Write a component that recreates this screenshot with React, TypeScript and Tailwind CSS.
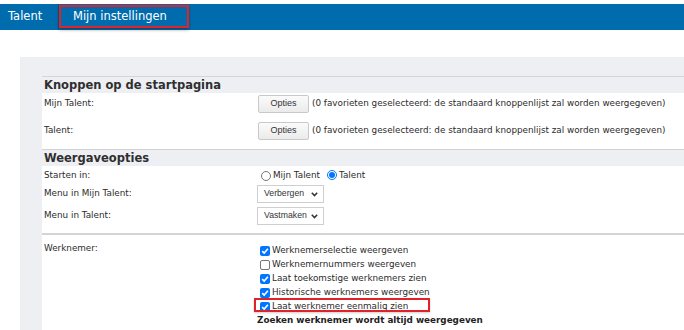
function Checkbox({ checked }: { checked: boolean }) {
  if (!checked) {
    return <span className="inline-block w-[10px] h-[10px] rounded-[2px] border border-[#767676] bg-white shrink-0" />;
  }
  return (
    <span className="inline-flex items-center justify-center w-[10px] h-[10px] rounded-[2px] bg-[#0075ff] shrink-0">
      <svg width="8" height="8" viewBox="0 0 8 8">
        <path d="M1.2 4.2 L3.2 6.1 L6.9 1.8" fill="none" stroke="white" strokeWidth="1.6" />
      </svg>
    </span>
  );
}

function Radio({ checked }: { checked: boolean }) {
  if (!checked) {
    return <span className="inline-block w-[10px] h-[10px] rounded-full border border-[#767676] bg-white shrink-0" />;
  }
  return (
    <span className="inline-flex items-center justify-center w-[10px] h-[10px] rounded-full border border-[#0075ff] bg-white shrink-0">
      <span className="w-[6px] h-[6px] rounded-full bg-[#0075ff]" />
    </span>
  );
}

function Select({ value }: { value: string }) {
  return (
    <div className="w-[67px] h-[18px] border border-[#cfcfcf] bg-white flex items-center justify-between pl-[6px] pr-[5px] font-['Liberation_Sans',sans-serif] text-[8.7px] text-[#333]">
      <span>{value}</span>
      <svg width="7" height="5" viewBox="0 0 7 5">
        <path d="M0.8 0.8 L3.5 3.6 L6.2 0.8" fill="none" stroke="#333" strokeWidth="1.5" />
      </svg>
    </div>
  );
}

function OptiesRow({ label }: { label: string }) {
  return (
    <div className="flex items-center h-[18px]">
      <div className="w-[213px]">{label}</div>
      <button className="ml-[1px] w-[51px] h-[18px] border border-[#c9c9c9] rounded-[2px] bg-gradient-to-b from-[#fbfbfb] to-[#ebebeb] font-['Liberation_Sans',sans-serif] text-[9px] text-[#333]">
        Opties
      </button>
      <span className="ml-[3px]">(0 favorieten geselecteerd: de standaard knoppenlijst zal worden weergegeven)</span>
    </div>
  );
}

const werknemerOpties = [
  { label: "Werknemerselectie weergeven", checked: true },
  { label: "Werknemernummers weergeven", checked: false },
  { label: "Laat toekomstige werknemers zien", checked: true },
  { label: "Historische werknemers weergeven", checked: true },
  { label: "Laat werknemer eenmalig zien", checked: true, marked: true },
];

export default function App() {
  return (
    <div className="w-[684px] h-[330px] overflow-hidden bg-white font-['DejaVu_Sans',sans-serif] text-[8.8px] text-[#2b2b2b]">
      <div className="h-[4px]" />
      <nav className="h-[26px] bg-[#006cad] flex items-start text-white text-[11.5px]">
        <div className="h-[26px] w-[59px] pl-[8px] flex items-center border-r border-[#005a91]">Talent</div>
        <div className="mt-[1px] h-[23px] w-[130px] pl-[12px] flex items-center border-2 border-[#e0222b] shadow-[0_2px_3px_rgba(0,0,0,0.3)]">
          Mijn instellingen
        </div>
      </nav>
      <div className="h-[27px]" />
      <div className="flex h-[273px]">
        <div className="w-[20px]" />
        <div className="flex-1 bg-[#eeeff3] pl-[22px] pt-[19px]">
          <div className="border-t border-[#d5d5d8]">
            <h2 className="h-[16px] pl-[2px] leading-[16px] font-bold text-[11.5px] text-[#2f2f2f]">Knoppen op de startpagina</h2>
            <div className="bg-white border-b border-[#d2d2d2] pl-[2px] pt-[2px] pb-[9px] flex flex-col gap-[9px]">
              <OptiesRow label="Mijn Talent:" />
              <OptiesRow label="Talent:" />
            </div>
            <h2 className="h-[16px] pl-[2px] leading-[16px] font-bold text-[11.5px] text-[#2f2f2f]">Weergaveopties</h2>
            <div className="bg-white h-[200px] pt-[1px]">
              <div className="pl-[2px]">
                <div className="flex items-center h-[17px]">
                  <div className="w-[213px]">Starten in:</div>
                  <div className="flex items-center ml-[4px]">
                    <Radio checked={false} />
                    <span className="ml-[2px]">Mijn Talent</span>
                    <span className="ml-[7px]"><Radio checked /></span>
                    <span className="ml-[2px]">Talent</span>
                  </div>
                </div>
                <div className="flex items-center mt-[1px]">
                  <div className="w-[213px]">Menu in Mijn Talent:</div>
                  <Select value="Verbergen" />
                </div>
                <div className="flex items-center mt-[4px]">
                  <div className="w-[213px]">Menu in Talent:</div>
                  <Select value="Vastmaken" />
                </div>
              </div>
              <div className="mt-[8px] h-[2px] bg-[#d4d4d4]" />
              <div className="pl-[2px] mt-[9px] flex">
                <div className="w-[213px] -mt-[3px] leading-[14px]">Werknemer:</div>
                <div>
                  {werknemerOpties.map((o) => (
                    <div key={o.label} className="relative h-[14px] flex items-center pl-[3px]">
                      <Checkbox checked={o.checked} />
                      <span className="ml-[2px]">{o.label}</span>
                      {o.marked && (
                        <span className="absolute left-[-3px] top-[-2px] w-[176px] h-[14px] border-2 border-[#e0222b] shadow-[0_1px_2px_rgba(0,0,0,0.2)]" />
                      )}
                    </div>
                  ))}
                  <div className="h-[12px] leading-[12px] font-bold text-[#1f1f1f]">Zoeken werknemer wordt altijd weergegeven</div>
                </div>
              </div>
            </div>
          </div>
        </div>
      </div>
    </div>
  );
}
